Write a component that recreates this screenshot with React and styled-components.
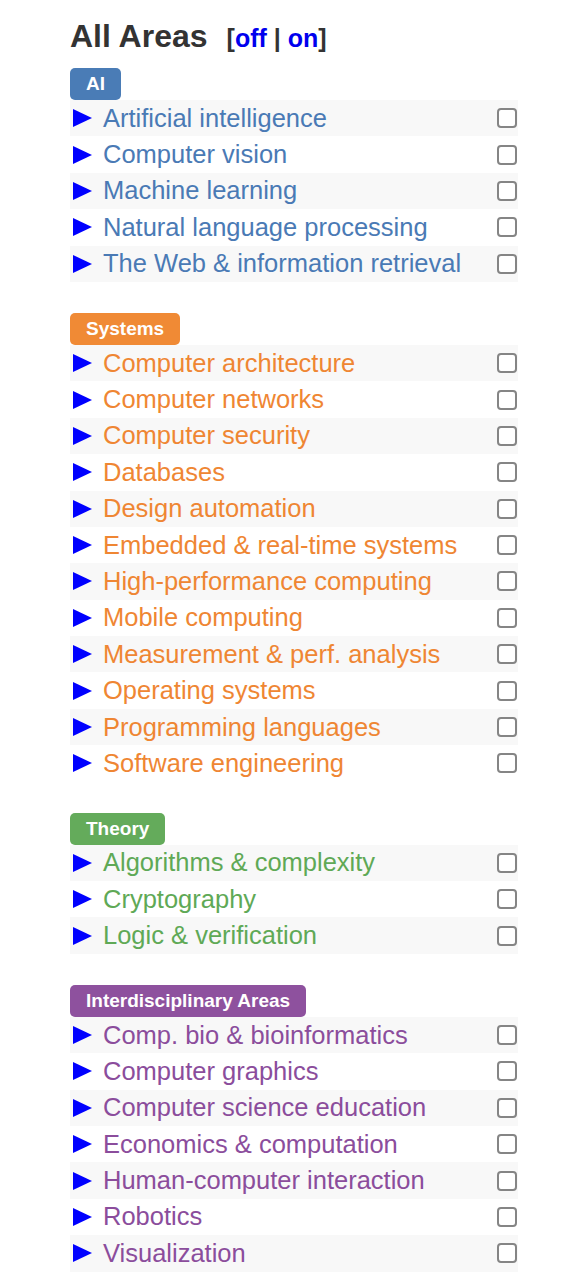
import styled, { createGlobalStyle } from "styled-components";

const GlobalStyle = createGlobalStyle`
  body {
    margin: 0;
    background: #fff;
    font-family: "Liberation Sans", Arial, sans-serif;
  }
`;

const Page = styled.div`
  width: 448px;
  padding: 18px 0 0 70px;
`;

const Header = styled.div`
  display: flex;
  align-items: baseline;
  gap: 19px;
  margin-bottom: 14px;
`;

const Title = styled.h2`
  margin: 0;
  font-size: 32px;
  line-height: 36px;
  font-weight: bold;
  color: #333;
`;

const Toggle = styled.span`
  font-size: 25px;
  font-weight: bold;
  color: #333;
`;

const ToggleLink = styled.a`
  color: #0000ee;
  text-decoration: none;
`;

const Section = styled.div`
  margin-bottom: 31px;
`;

const Badge = styled.span`
  display: inline-block;
  height: 32px;
  line-height: 32px;
  padding: 0 16px;
  border-radius: 5px;
  background: ${(p) => p.$color};
  color: #fff;
  font-size: 19px;
  font-weight: bold;
`;

const Row = styled.div`
  display: flex;
  align-items: center;
  height: 36.4px;
  padding: 0 0 0 3px;
  &:nth-child(odd) {
    background: #f8f8f8;
  }
`;

const Arrow = styled.span`
  width: 0;
  height: 0;
  border-left: 19px solid #0000ff;
  border-top: 9px solid transparent;
  border-bottom: 9px solid transparent;
  margin-right: 11px;
`;

const Label = styled.a`
  flex: 1;
  color: ${(p) => p.$color};
  font-size: 25.5px;
  text-decoration: none;
`;

const Box = styled.span`
  width: 16px;
  height: 16px;
  border: 2px solid #858585;
  border-radius: 4px;
  background: #fff;
  margin-right: 1px;
`;

const sections = [
  {
    name: "AI",
    color: "#4a7cb6",
    text: "#4a7ab5",
    items: [
      "Artificial intelligence",
      "Computer vision",
      "Machine learning",
      "Natural language processing",
      "The Web & information retrieval",
    ],
  },
  {
    name: "Systems",
    color: "#f08a35",
    text: "#ef8633",
    items: [
      "Computer architecture",
      "Computer networks",
      "Computer security",
      "Databases",
      "Design automation",
      "Embedded & real-time systems",
      "High-performance computing",
      "Mobile computing",
      "Measurement & perf. analysis",
      "Operating systems",
      "Programming languages",
      "Software engineering",
    ],
  },
  {
    name: "Theory",
    color: "#64ab5b",
    text: "#5fa956",
    items: ["Algorithms & complexity", "Cryptography", "Logic & verification"],
  },
  {
    name: "Interdisciplinary Areas",
    color: "#8e519e",
    text: "#8b4d9c",
    items: [
      "Comp. bio & bioinformatics",
      "Computer graphics",
      "Computer science education",
      "Economics & computation",
      "Human-computer interaction",
      "Robotics",
      "Visualization",
    ],
  },
];

const App = () => {
  return (
    <>
      <GlobalStyle />
      <Page>
        <Header>
          <Title>All Areas</Title>
          <Toggle>
            [<ToggleLink href="#">off</ToggleLink> | <ToggleLink href="#">on</ToggleLink>]
          </Toggle>
        </Header>
        {sections.map((s) => (
          <Section key={s.name}>
            <Badge $color={s.color}>{s.name}</Badge>
            <div>
              {s.items.map((item) => (
                <Row key={item}>
                  <Arrow />
                  <Label href="#" $color={s.text}>
                    {item}
                  </Label>
                  <Box />
                </Row>
              ))}
            </div>
          </Section>
        ))}
      </Page>
    </>
  );
};

export default App;
